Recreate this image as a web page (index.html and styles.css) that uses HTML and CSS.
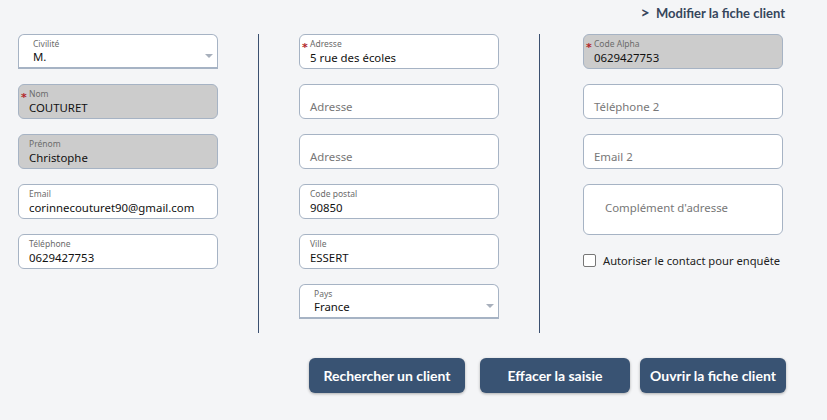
FILE: index.html
```html
<!DOCTYPE html>
<html lang="fr">
<head>
    <meta charset="UTF-8">
    <meta name="viewport" content="width=device-width, initial-scale=1.0">
    <title>Fiche client</title>
    <link rel="stylesheet" href="styles.css">
</head>
<body>
    <div class="page">
        <div class="topbar">
            <a class="edit-link" href="#"><span class="chevron">&gt;</span> Modifier la fiche client</a>
        </div>

        <div class="form">
            <div class="column">
                <div class="field select">
                    <span class="label">Civilité</span>
                    <span class="value">M.</span>
                    <span class="arrow"></span>
                </div>
                <div class="field locked">
                    <span class="required">*</span>
                    <span class="label">Nom</span>
                    <span class="value">COUTURET</span>
                </div>
                <div class="field locked">
                    <span class="label">Prénom</span>
                    <span class="value">Christophe</span>
                </div>
                <div class="field">
                    <span class="label">Email</span>
                    <span class="value">corinnecouturet90@gmail.com</span>
                </div>
                <div class="field">
                    <span class="label">Téléphone</span>
                    <span class="value">0629427753</span>
                </div>
            </div>

            <div class="separator"></div>

            <div class="column">
                <div class="field">
                    <span class="required">*</span>
                    <span class="label">Adresse</span>
                    <span class="value">5 rue des écoles</span>
                </div>
                <div class="field empty">
                    <span class="placeholder">Adresse</span>
                </div>
                <div class="field empty">
                    <span class="placeholder">Adresse</span>
                </div>
                <div class="field">
                    <span class="label">Code postal</span>
                    <span class="value">90850</span>
                </div>
                <div class="field">
                    <span class="label">Ville</span>
                    <span class="value">ESSERT</span>
                </div>
                <div class="field select">
                    <span class="label">Pays</span>
                    <span class="value">France</span>
                    <span class="arrow"></span>
                </div>
            </div>

            <div class="separator"></div>

            <div class="column third">
                <div class="field locked">
                    <span class="required">*</span>
                    <span class="label">Code Alpha</span>
                    <span class="value">0629427753</span>
                </div>
                <div class="field empty">
                    <span class="placeholder">Téléphone 2</span>
                </div>
                <div class="field empty">
                    <span class="placeholder">Email 2</span>
                </div>
                <div class="field textarea">
                    <span class="placeholder">Complément d'adresse</span>
                </div>
                <label class="checkbox">
                    <span class="box"></span>
                    Autoriser le contact pour enquête
                </label>
            </div>
        </div>

        <div class="actions">
            <button class="search">Rechercher un client</button>
            <button class="clear">Effacer la saisie</button>
            <button class="open">Ouvrir la fiche client</button>
        </div>
    </div>
</body>
</html>
```

FILE: styles.css
```css
body {
    margin: 0;
    background-color: #f4f5f7;
    font-family: 'Noto Sans', 'Open Sans', sans-serif;
    color: #1a1a1a;
}

.page {
    width: 827px;
    height: 420px;
    box-sizing: border-box;
}

.topbar {
    height: 34px;
    display: flex;
    justify-content: flex-end;
    align-items: flex-start;
    padding: 5px 42px 0 0;
    box-sizing: border-box;
}

.edit-link {
    font-family: 'Lato', sans-serif;
    font-weight: bold;
    font-size: 13px;
    color: #36465c;
    text-decoration: none;
}

.chevron {
    margin-right: 3px;
    font-size: 16px;
    line-height: 13px;
}

.form {
    display: grid;
    grid-template-columns: 200px 1px 200px 1px 203px;
    column-gap: 40px;
    padding-left: 18px;
}

.column {
    display: flex;
    flex-direction: column;
    gap: 15px;
}

.column.third {
    padding-left: 3px;
}

.separator {
    background-color: #3b5070;
    height: 299px;
}

.field {
    position: relative;
    height: 35px;
    box-sizing: border-box;
    border: 1px solid #a6b3c4;
    border-radius: 6px;
    background-color: #fff;
    padding: 3px 10px 0 10px;
    display: flex;
    flex-direction: column;
}

.field.locked {
    background-color: #cccccc;
}

.field.select {
    border-radius: 6px 6px 0 0;
    border-bottom-width: 2px;
    padding-left: 14px;
}

.label {
    font-size: 8.5px;
    line-height: 12px;
    color: #6b6b6b;
}

.value {
    font-size: 11.4px;
    line-height: 16px;
    color: #111;
}

.select .value {
    margin-top: -1px;
}

.required {
    position: absolute;
    left: 2px;
    top: 7px;
    font-family: 'DejaVu Sans', sans-serif;
    font-size: 11px;
    line-height: 12px;
    font-weight: bold;
    color: #b3262b;
}

.placeholder {
    font-size: 11.4px;
    color: #777;
    margin-top: 11px;
}

.arrow {
    position: absolute;
    right: 4px;
    top: 19px;
    border-left: 4px solid transparent;
    border-right: 4px solid transparent;
    border-top: 4px solid #a8b0bc;
}

.field.textarea {
    height: 51px;
    padding-left: 21px;
}

.textarea .placeholder {
    margin-top: 12px;
}

.checkbox {
    display: flex;
    align-items: center;
    gap: 7px;
    margin-top: 3px;
    font-size: 11.2px;
    color: #222;
    white-space: nowrap;
}

.box {
    flex-shrink: 0;
    width: 11px;
    height: 11px;
    border: 1px solid #767676;
    border-radius: 2px;
    background-color: #fff;
}

.actions {
    display: flex;
    justify-content: flex-end;
    gap: 10px;
    padding: 25px 41px 0 0;
}

.actions button {
    height: 35px;
    padding: 0;
    border: none;
    border-radius: 6px;
    background-color: #395373;
    color: #fff;
    font-family: 'Lato', sans-serif;
    font-weight: bold;
    font-size: 14px;
    box-shadow: 0 1px 3px rgba(0, 0, 0, 0.3);
    cursor: pointer;
}

.actions .search {
    width: 156px;
    margin-right: 5px;
}

.actions .clear {
    width: 150px;
}

.actions .open {
    width: 146px;
}
```
